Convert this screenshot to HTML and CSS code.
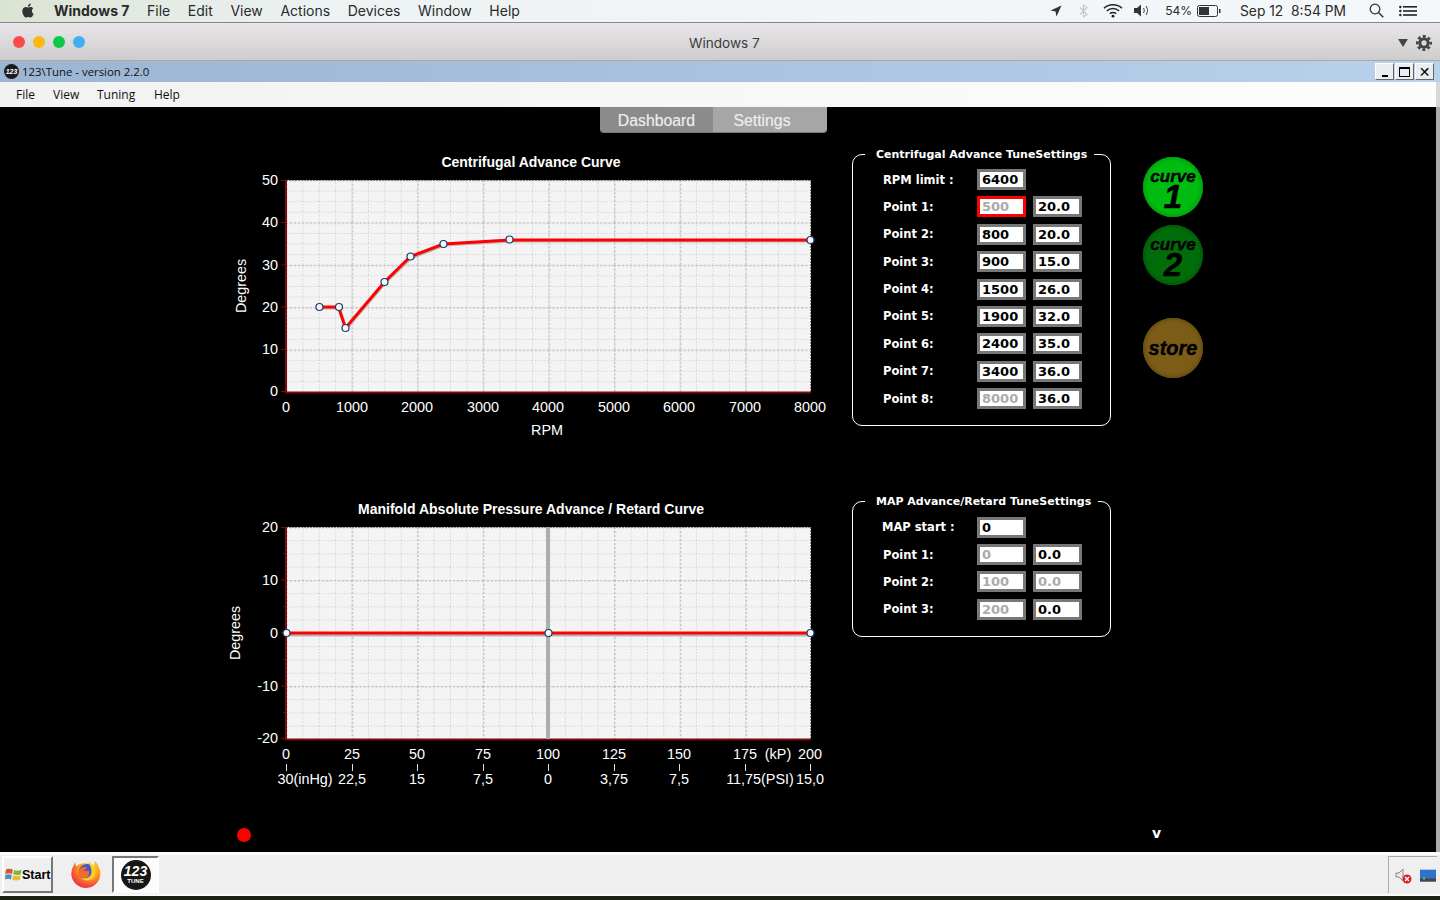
FILE: index.html
```html
<!DOCTYPE html>
<html lang="en">
<head>
    <meta charset="UTF-8">
    <title>123\Tune - version 2.2.0</title>
    <link rel="stylesheet" href="styles.css">
</head>
<body>
<!-- mac menu bar -->
<div class="mac-bar">
    <svg class="apple" viewBox="0 0 24 24"><path d="M12.152 6.896c-.948 0-2.415-1.078-3.96-1.04-2.04.027-3.91 1.183-4.961 3.014-2.117 3.675-.546 9.103 1.519 12.09 1.013 1.454 2.208 3.09 3.792 3.039 1.52-.065 2.09-.987 3.935-.987 1.831 0 2.35.987 3.96.948 1.637-.026 2.676-1.48 3.676-2.948 1.156-1.688 1.636-3.325 1.662-3.415-.039-.013-3.182-1.221-3.22-4.857-.026-3.04 2.48-4.494 2.597-4.559-1.429-2.09-3.623-2.324-4.39-2.376-2-.156-3.675 1.09-4.61 1.09zM15.53 3.83c.843-1.012 1.4-2.427 1.245-3.83-1.207.052-2.662.805-3.532 1.818-.78.896-1.454 2.338-1.273 3.714 1.338.104 2.715-.688 3.559-1.701"/></svg>
    <b class="mac-app">Windows 7</b>
    <span class="mac-item">File</span>
    <span class="mac-item">Edit</span>
    <span class="mac-item">View</span>
    <span class="mac-item">Actions</span>
    <span class="mac-item">Devices</span>
    <span class="mac-item">Window</span>
    <span class="mac-item">Help</span>
    <div class="mac-status">
        <svg class="st-loc" width="12" height="12" viewBox="0 0 12 12"><path d="M11.5.5L.5 5.5l5 1 1 5z" fill="#333"/></svg>
        <svg class="st-bt" width="9" height="14" viewBox="0 0 9 14"><path d="M1 3.5l7 7L4.5 13V1L8 3.5l-7 7" fill="none" stroke="#c4c6c8" stroke-width="1.1"/></svg>
        <svg class="st-wifi" width="20" height="15" viewBox="0 0 20 15"><g fill="none" stroke="#222" stroke-width="1.5"><path d="M1 5.2C6 .6 14 .6 19 5.2"/><path d="M3.8 8C7.5 4.8 12.5 4.8 16.2 8"/><path d="M6.8 10.6C8.7 9.2 11.3 9.2 13.2 10.6"/></g><circle cx="10" cy="13.2" r="1.4" fill="#222"/></svg>
        <svg class="st-vol" width="18" height="13" viewBox="0 0 18 13"><path d="M0 4h3l4-3.5v12L3 9H0z" fill="#333"/><g fill="none" stroke="#333" stroke-width="1"><path d="M9.500 4c1 1.500 1 3.500 0 5"/><path d="M12 2c2 3 2 6 0 9"/></g></svg>
        <span class="st-pct">54%</span>
        <svg class="st-bat" width="24" height="12" viewBox="0 0 24 12"><rect x=".5" y=".5" width="20" height="11" rx="2" fill="none" stroke="#333"/><rect x="2" y="2" width="10" height="8" fill="#333"/><rect x="22" y="4" width="1.500" height="4" fill="#333"/></svg>
        <span class="st-clock">Sep 12&nbsp; 8:54 PM</span>
        <svg class="st-find" width="15" height="15" viewBox="0 0 15 15"><circle cx="6" cy="6" r="4.800" fill="none" stroke="#333" stroke-width="1.300"/><path d="M9.500 9.500l4.800 4.800" stroke="#333" stroke-width="1.500"/></svg>
        <svg class="st-list" width="18" height="12" viewBox="0 0 18 12"><g fill="#222"><circle cx="1.300" cy="2" r="1.200"/><circle cx="1.300" cy="6" r="1.200"/><circle cx="1.300" cy="10" r="1.200"/><rect x="4" y="1" width="14" height="1.600"/><rect x="4" y="5.200" width="14" height="1.600"/><rect x="4" y="9.200" width="14" height="1.600"/></g></svg>
    </div>
</div>

<!-- vm window title -->
<div class="vm-bar">
    <div class="lights">
        <i class="light red"></i><i class="light amber"></i><i class="light green"></i><i class="light blue"></i>
    </div>
    <span class="vm-title">Windows 7</span>
    <svg class="vm-drop" width="10" height="8" viewBox="0 0 11 9"><path d="M0 0h11L5.500 9z" fill="#444"/></svg>
    <svg class="vm-gear" width="16" height="16" viewBox="0 0 16 16"><circle cx="8" cy="8" r="4.200" fill="none" stroke="#444" stroke-width="3"/><circle cx="8" cy="8" r="6.700" fill="none" stroke="#444" stroke-width="2.600" stroke-dasharray="2.900 2.360" stroke-dashoffset="1.400"/></svg>
</div>

<!-- app title -->
<div class="app-title">
    <div class="app-logo">123</div>
    <span class="app-name">123\Tune - version 2.2.0</span>
    <div class="win-btns">
        <div class="win-btn"><i class="glyph-min"></i></div>
        <div class="win-btn"><i class="glyph-max"></i></div>
        <div class="win-btn glyph-close">&#10005;</div>
    </div>
</div>
<div class="app-menu">
    <span class="menu-file">File</span>
    <span class="menu-view">View</span>
    <span class="menu-tuning">Tuning</span>
    <span class="menu-help">Help</span>
</div>

<div class="main">
    <div class="tabs">
        <div class="tab active">Dashboard</div>
        <div class="tab settings">Settings</div>
    </div>

    <div class="tune-row first">
        <svg class="chart chart-a" viewBox="225 145 605 300">
            <defs>
                <pattern id="minorA" patternUnits="userSpaceOnUse" x="286" y="180" width="16.406" height="10.6">
                    <path d="M0 .5H16.406M.5 0V10.6" stroke="#c8c8c8" stroke-dasharray="1 2" fill="none"/>
                </pattern>
                <pattern id="majorA" patternUnits="userSpaceOnUse" x="286" y="180" width="65.625" height="42.4">
                    <path d="M0 .75H65.625M.75 0V42.4" stroke="#c4c4c4" stroke-width="1.500" stroke-dasharray="2 2" fill="none"/>
                </pattern>
            </defs>
            <text class="chart-title" x="531" y="167">Centrifugal Advance Curve</text>
            <rect x="286" y="180" width="525" height="212" fill="#f4f4f4"/>
            <rect x="286" y="180" width="525" height="212" fill="url(#minorA)"/>
            <rect x="286" y="180" width="525" height="212" fill="url(#majorA)"/>
            <path class="frame" d="M286 180.500H811M810.500 180V392"/>
            <path class="axis" d="M286 180V392.500H811"/>
            <path class="tick" d="M281 180.500h5M281 222.500h5M281 265h5M281 307h5M281 349.500h5M281 391.500h5"/>
            <g class="curve-shadow"><path d="M320 308H339L346 329L385 283L411 258L444 245L510 241H811"/></g>
            <path class="curve" d="M319.500 307H338.500L345.500 328L384.500 282L410.500 256.500L443.500 244L509.500 240H810.500"/>
            <g class="knobs">
                <circle cx="319.500" cy="307" r="3.500"/><circle cx="339" cy="307" r="3.500"/><circle cx="345.500" cy="328" r="3.500"/>
                <circle cx="384.500" cy="282" r="3.500"/><circle cx="410.500" cy="256.500" r="3.500"/><circle cx="443.500" cy="244" r="3.500"/>
                <circle cx="509.500" cy="239.500" r="3.500"/><circle cx="810.500" cy="240" r="3.500"/>
            </g>
            <g class="y-label">
                <text x="278" y="185">50</text><text x="278" y="227">40</text><text x="278" y="270">30</text>
                <text x="278" y="312">20</text><text x="278" y="354">10</text><text x="278" y="396">0</text>
            </g>
            <g class="x-label">
                <text x="286" y="412">0</text><text x="352" y="412">1000</text><text x="417" y="412">2000</text>
                <text x="483" y="412">3000</text><text x="548" y="412">4000</text><text x="614" y="412">5000</text>
                <text x="679" y="412">6000</text><text x="745" y="412">7000</text><text x="810" y="412">8000</text>
                <text x="547" y="435">RPM</text>
            </g>
            <text class="axis-name" transform="translate(246 286) rotate(-90)">Degrees</text>
        </svg>

        <fieldset class="panel panel-a">
            <legend>Centrifugal Advance TuneSettings</legend>
            <div class="point-row"><span class="point-label">RPM limit :</span><div class="val">6400</div></div>
            <div class="point-row"><span class="point-label">Point 1:</span><div class="val muted alert">500</div><div class="val">20.0</div></div>
            <div class="point-row"><span class="point-label">Point 2:</span><div class="val">800</div><div class="val">20.0</div></div>
            <div class="point-row"><span class="point-label">Point 3:</span><div class="val">900</div><div class="val">15.0</div></div>
            <div class="point-row"><span class="point-label">Point 4:</span><div class="val">1500</div><div class="val">26.0</div></div>
            <div class="point-row"><span class="point-label">Point 5:</span><div class="val">1900</div><div class="val">32.0</div></div>
            <div class="point-row"><span class="point-label">Point 6:</span><div class="val">2400</div><div class="val">35.0</div></div>
            <div class="point-row"><span class="point-label">Point 7:</span><div class="val">3400</div><div class="val">36.0</div></div>
            <div class="point-row"><span class="point-label">Point 8:</span><div class="val muted">8000</div><div class="val">36.0</div></div>
        </fieldset>

        <div class="round-btns">
            <div class="round-btn curve-on"><span class="btn-word">curve</span><span class="btn-num">1</span></div>
            <div class="round-btn curve-off"><span class="btn-word">curve</span><span class="btn-num">2</span></div>
            <div class="round-btn store"><span class="btn-store">store</span></div>
        </div>
    </div>

    <div class="tune-row second">
        <svg class="chart chart-b" viewBox="225 492 605 308">
            <defs>
                <pattern id="minorB" patternUnits="userSpaceOnUse" x="286" y="527" width="16.406" height="13.250">
                    <path d="M0 .5H16.406M.5 0V13.250" stroke="#c8c8c8" stroke-dasharray="1 2" fill="none"/>
                </pattern>
                <pattern id="majorB" patternUnits="userSpaceOnUse" x="286" y="527" width="65.625" height="53">
                    <path d="M0 .75H65.625M.75 0V53" stroke="#c4c4c4" stroke-width="1.500" stroke-dasharray="2 2" fill="none"/>
                </pattern>
            </defs>
            <text class="chart-title" x="531" y="514">Manifold Absolute Pressure Advance / Retard Curve</text>
            <rect x="286" y="527" width="525" height="212" fill="#f4f4f4"/>
            <rect x="286" y="527" width="525" height="212" fill="url(#minorB)"/>
            <rect x="286" y="527" width="525" height="212" fill="url(#majorB)"/>
            <path class="frame" d="M286 527.500H811M810.500 527V739"/>
            <path class="axis" d="M286 527V739.500H811"/>
            <path class="tick" d="M281 527.500h5M283 553.500h3M281 580h5M283 606.500h3M281 633h5M283 659.500h3M281 686h5M283 712.500h3M281 738.500h5"/>
            <rect x="546" y="527" width="4" height="212" fill="#adadad"/>
            <g class="curve-shadow"><path d="M287 635H811"/></g>
            <path class="curve" d="M286 633H810.500"/>
            <g class="knobs">
                <circle cx="286.500" cy="633" r="3.500"/><circle cx="548.500" cy="633" r="3.500"/><circle cx="810.500" cy="633" r="3.500"/>
            </g>
            <g class="y-label">
                <text x="278" y="532">20</text><text x="278" y="585">10</text><text x="278" y="638">0</text>
                <text x="278" y="691">-10</text><text x="278" y="743">-20</text>
            </g>
            <g class="x-label">
                <text x="286" y="759">0</text><text x="352" y="759">25</text><text x="417" y="759">50</text>
                <text x="483" y="759">75</text><text x="548" y="759">100</text><text x="614" y="759">125</text>
                <text x="679" y="759">150</text><text x="745" y="759">175</text><text x="778" y="759">(kP)</text><text x="810" y="759">200</text>
            </g>
            <path class="pressure-tick" d="M286.500 764v7M352.500 764v7M417.500 764v7M483.500 764v7M548.500 764v7M614.500 764v7M679.500 764v7M745.500 764v7M810.500 764v7"/>
            <g class="x-label">
                <text x="305" y="784">30(inHg)</text><text x="352" y="784">22,5</text><text x="417" y="784">15</text>
                <text x="483" y="784">7,5</text><text x="548" y="784">0</text><text x="614" y="784">3,75</text>
                <text x="679" y="784">7,5</text><text x="760" y="784">11,75(PSI)</text><text x="810" y="784">15,0</text>
            </g>
            <text class="axis-name" transform="translate(240 633) rotate(-90)">Degrees</text>
        </svg>

        <fieldset class="panel panel-b">
            <legend>MAP Advance/Retard TuneSettings</legend>
            <div class="point-row"><span class="point-label map-start">MAP start :</span><div class="val">0</div></div>
            <div class="point-row"><span class="point-label">Point 1:</span><div class="val muted">0</div><div class="val">0.0</div></div>
            <div class="point-row"><span class="point-label">Point 2:</span><div class="val muted">100</div><div class="val muted">0.0</div></div>
            <div class="point-row"><span class="point-label">Point 3:</span><div class="val muted">200</div><div class="val">0.0</div></div>
        </fieldset>
    </div>

    <div class="status-row">
        <i class="status-dot"></i>
        <b class="status-v">v</b>
    </div>
</div>

<!-- windows taskbar -->
<div class="taskbar">
    <div class="start-btn">
        <svg class="start-flag" width="17" height="15" viewBox="0 0 17 15">
            <path d="M1 2.500C3 1.500 5 1.500 7.800 2.600L7 7C4.500 6 3 6 .3 7z" fill="#d9532c"/>
            <path d="M9 3C11 4 13.500 4 16.500 2.800L15.800 7.200C13 8.300 10.800 8.300 8.300 7.300z" fill="#7fb53c"/>
            <path d="M.2 8C2.500 7 4.500 7 6.800 8L6 12.600C4 11.600 2 11.600 .2 12.600z" fill="#4a90c8"/>
            <path d="M8.100 8.400C10.500 9.300 13 9.300 15.600 8.300L15 12.800C12.500 13.800 10 13.800 7.300 12.800z" fill="#eebb33"/>
        </svg>
        <b>Start</b>
    </div>
    <svg class="firefox" width="30" height="30" viewBox="0 0 30 30">
        <defs>
            <radialGradient id="foxBody" cx="65%" cy="25%" r="85%">
                <stop offset="0" stop-color="#ffe226"/><stop offset=".45" stop-color="#ff9a1f"/><stop offset=".8" stop-color="#f4433b"/><stop offset="1" stop-color="#e3316a"/>
            </radialGradient>
        </defs>
        <path d="M24 1c1.500 2 2.500 3 3.200 5a14.500 14.500 0 1 1-24.500-.5L4 2l1 4.500C8 4 11 3 14 3.200 18 3.300 21 4 23 6z" fill="url(#foxBody)"/>
        <circle cx="16" cy="12" r="8" fill="#3f57d0"/>
        <path d="M9 9c2-2 5-2.500 7-1.500-1 1.500-2 2-3.500 2.500 1 1 3.500 1 5 .5 1.500 2.500.5 6-2.500 7.500-3 1-6-.5-7-2-1.500-2.500-.5-5 1-7z" fill="#f5692c"/>
        <path d="M17 2c5 1.500 8 6 7.500 11-.5 4.500-4 7.500-8.500 7.500-2.500 0-4.500-1-6-2.500 5 1.500 10.500-1 10.500-6 0-4-1.500-7-3.500-10z" fill="#ffcf26"/>
    </svg>
    <div class="task-app">
        <div class="tune-logo"><span class="tune-num">123</span><span class="tune-word">TUNE</span></div>
    </div>
    <div class="tray">
        <svg width="17" height="17" viewBox="0 0 17 17">
            <path d="M1 6h3l4-4v12l-4-4H1z" fill="#e8e8e8" stroke="#888"/>
            <circle cx="12" cy="12" r="4.500" fill="#dd2222"/>
            <path d="M10 10l4 4M14 10l-4 4" stroke="#fff" stroke-width="1.300"/>
        </svg>
        <svg width="16" height="13" viewBox="0 0 16 13">
            <rect width="16" height="12.500" fill="#2f74c9"/><rect y="9.500" width="16" height="3" fill="#444"/>
            <rect x="3" y="8.500" width="2" height="2" fill="#7fc241"/>
            <rect width="16" height="1" fill="#a9c9ea"/>
        </svg>
    </div>
</div>
<div class="wallpaper"></div>
</body>
</html>
```

FILE: styles.css
```css
* {
    box-sizing: border-box;
}

html, body {
    margin: 0;
    height: 100%;
}

body {
    width: 1440px;
    height: 900px;
    overflow: hidden;
    background: #1c2116;
    font-family: "Liberation Sans", Arial, sans-serif;
}

/* mac menu bar */
.mac-bar {
    display: flex;
    align-items: center;
    height: 23px;
    padding-left: 21px;
    padding-bottom: 1px;
    background: linear-gradient(90deg, #dbe3d3, #edf2f3 22%, #f5f8fa);
    border-bottom: 1px solid #84878a;
    font-family: Inter, "Liberation Sans", sans-serif;
    font-size: 14px;
    color: #2a2a2a;
}

.apple {
    width: 14px;
    height: 15px;
    margin-right: 19px;
    fill: #333;
}

.mac-app {
    width: 93px;
    font-weight: 700;
    white-space: nowrap;
}

.mac-item {
    margin-right: 17.600px;
}

.mac-status {
    display: flex;
    align-items: center;
    margin-left: auto;
    font-size: 14px;
}

.st-loc { margin-right: 17px; }
.st-bt { margin-right: 15px; }
.st-wifi { margin-right: 11px; }
.st-vol { margin-right: 13px; }
.st-pct { margin-right: 5px; font-size: 12px; }
.st-bat { margin-right: 19px; }
.st-clock { margin-right: 23px; font-size: 13.800px; }
.st-find { margin-right: 15px; }
.st-list { margin-right: 23px; }

/* vm window bar */
.vm-bar {
    display: flex;
    align-items: center;
    position: relative;
    height: 38px;
    padding-left: 13px;
    background: linear-gradient(#e9e7e9, #cecccd);
    border-bottom: 1px solid #aaa;
}

.lights {
    display: flex;
    gap: 8px;
}

.light {
    width: 12px;
    height: 12px;
    border-radius: 50%;
}

.light.red { background: #fc4a4c; }
.light.amber { background: #fdb80f; }
.light.green { background: #0fc84a; }
.light.blue { background: #43aef2; }

.vm-title {
    margin-left: 604px;
    margin-top: 3px;
    font-family: Inter, "Liberation Sans", sans-serif;
    font-size: 13.600px;
    color: #3c3c3c;
}

.vm-drop {
    margin-left: auto;
    margin-top: 3px;
    margin-right: 8px;
}

.vm-gear {
    margin-top: 2px;
    margin-right: 8px;
}

/* app title and menu */
.app-title {
    display: flex;
    align-items: center;
    height: 21px;
    padding-left: 4px;
    background: linear-gradient(90deg, #9bb5d2, #b8d2ec);
    font-family: "Open Sans", sans-serif;
    font-size: 11.400px;
    color: #111;
}

.app-logo {
    width: 15px;
    height: 15px;
    margin-right: 3px;
    border-radius: 50%;
    background: #1b1b1b;
    color: #fff;
    font: italic 700 7px/15px "Liberation Sans", sans-serif;
    text-align: center;
}

.win-btns {
    display: flex;
    gap: 1px;
    margin-left: auto;
    margin-right: 6px;
}

.win-btn {
    display: flex;
    align-items: center;
    justify-content: center;
    width: 19px;
    height: 17px;
    background: #e8edf2;
    border: 1px solid;
    border-color: #fff #666 #666 #fff;
}

.glyph-min {
    width: 6px;
    height: 2px;
    margin-top: 8px;
    background: #000;
}

.glyph-max {
    width: 11px;
    height: 10px;
    border: 1px solid #000;
    border-top-width: 2px;
}

.glyph-close {
    color: #000;
    font: 700 14px/1 "DejaVu Sans", sans-serif;
}

.app-menu {
    display: flex;
    align-items: center;
    height: 25px;
    padding-left: 16px;
    background: linear-gradient(90deg, #f2f2f2, #fdfdfd);
    border-right: 4px solid #d8d8d8;
    font-family: "Open Sans", sans-serif;
    font-size: 12px;
    color: #111;
}

.menu-file { width: 37px; }
.menu-view { width: 44px; }
.menu-tuning { width: 57px; }

/* main area */
.main {
    height: 745px;
    background: #000;
    border-right: 4px solid #ababab;
    color: #fff;
}

.tabs {
    display: flex;
    width: 227px;
    height: 26px;
    margin-left: 600px;
}

.tab {
    flex: none;
    width: 113px;
    padding-top: 5px;
    background: #8b8b8b;
    border-bottom: 1px solid #777;
    border-radius: 0 0 0 4px;
    color: #ececec;
    font-size: 15.800px;
    text-align: center;
    text-shadow: 0 0 1px rgba(236, 236, 236, 0.5);
}

.tab.settings {
    width: 114px;
    padding-right: 16px;
    background: #a6a6a6;
    border-radius: 0 0 4px 0;
}

.tune-row {
    display: flex;
    align-items: flex-start;
    padding-left: 225px;
}

.tune-row.first {
    margin-top: 12px;
}

.tune-row.second {
    margin-top: 47px;
}

.chart {
    display: block;
    flex: none;
    width: 605px;
}

.chart-a { height: 300px; }
.chart-b { height: 308px; }

.chart text {
    fill: #fff;
}

.chart-title {
    font-size: 14px;
    font-weight: 700;
    text-anchor: middle;
}

.y-label text {
    font-size: 14.400px;
    text-anchor: end;
}

.x-label text {
    font-size: 14.400px;
    text-anchor: middle;
}

.axis-name {
    font-size: 14.300px;
    text-anchor: middle;
}

.frame {
    fill: none;
    stroke: #8c8c8c;
    stroke-dasharray: 2 1;
}

.axis {
    fill: none;
    stroke: #7c0a0a;
    stroke-width: 2;
}

.tick {
    fill: none;
    stroke: #7c0a0a;
}

.pressure-tick {
    fill: none;
    stroke: #ddd;
}

.curve {
    fill: none;
    stroke: #f00;
    stroke-width: 3;
}

.curve-shadow path {
    fill: none;
    stroke: #b5b5b5;
    stroke-width: 3;
}

.knobs circle {
    fill: #f5f7fa;
    stroke: #1e3a66;
    stroke-width: 1.200;
}

/* settings panels */
.panel {
    flex: none;
    width: 259px;
    min-width: 0;
    margin: 1px 0 0 22px;
    padding: 7px 0 0 30px;
    border: 1px solid #fff;
    border-radius: 10px;
    font-family: "DejaVu Sans", sans-serif;
}

.panel-a { height: 280px; }
.panel-b { height: 144px; padding-top: 7.700px; }

.panel legend {
    margin-left: -18px;
    padding: 1px 7px 0 11px;
    color: #fff;
    font-size: 11px;
    font-weight: 700;
    line-height: 15px;
    white-space: nowrap;
}

.point-row {
    display: flex;
    align-items: center;
    gap: 7px;
    height: 21px;
    margin-bottom: 6.400px;
}

.point-label {
    width: 87px;
    font-size: 11.500px;
    font-weight: 700;
    white-space: nowrap;
}

.map-start {
    margin-left: -1px;
    margin-right: 1px;
}

.val {
    width: 49px;
    height: 21px;
    padding-left: 2px;
    background: #fff;
    border: 3px solid #777;
    color: #000;
    font-size: 13px;
    font-weight: 700;
    line-height: 15px;
}

.val.muted {
    color: #aaa;
}

.val.alert {
    border-color: #f00;
}

/* round buttons */
.round-btns {
    display: flex;
    flex-direction: column;
    width: 60px;
    margin: 12px 0 0 32px;
}

.round-btn {
    display: flex;
    flex-direction: column;
    align-items: center;
    justify-content: center;
    width: 60px;
    height: 60px;
    border-radius: 50%;
    color: #000;
    font-style: italic;
    font-weight: 700;
}

.round-btn.curve-on {
    padding-top: 7px;
    background: #00bb10;
    box-shadow: inset 0 0 3px 2px #00a20e;
}

.round-btn.curve-off {
    margin-top: 8px;
    padding-top: 7px;
    background: #006d0a;
    box-shadow: inset 0 0 3px 2px #005c08;
}

.round-btn.store {
    margin-top: 33px;
    background: #7b5d18;
    box-shadow: inset 0 0 3px 2px #6a4f12;
}

.btn-word {
    margin-top: -2px;
    font-size: 17px;
    line-height: 14px;
    -webkit-text-stroke: .4px #000;
}

.btn-num {
    font-size: 33px;
    line-height: 25px;
    -webkit-text-stroke: .6px #000;
}

.btn-store {
    font-size: 20px;
    -webkit-text-stroke: .4px #000;
}

.status-row {
    display: flex;
    align-items: center;
    margin-top: 26px;
    padding-left: 237px;
}

.status-dot {
    width: 14px;
    height: 14px;
    border-radius: 50%;
    background: #f00;
}

.status-v {
    margin-left: 901px;
    margin-bottom: 4px;
    font: 700 14px/14px "DejaVu Sans", sans-serif;
}

/* taskbar */
.taskbar {
    display: flex;
    align-items: center;
    height: 44px;
    padding-left: 2px;
    background: #efefef;
    border-top: 3px solid #fbfbfb;
    border-bottom: 2px solid #fbfbfb;
}

.start-btn {
    display: flex;
    align-items: center;
    width: 51px;
    height: 37px;
    padding-left: 1px;
    background: #efefef;
    border: 2px solid;
    border-color: #fff #777 #777 #fff;
    color: #000;
}

.start-flag {
    flex: none;
}

.start-btn b {
    font-size: 12.500px;
}

.firefox {
    margin-left: 18px;
}

.task-app {
    display: flex;
    align-items: center;
    justify-content: center;
    width: 47px;
    height: 37px;
    margin-left: 11px;
    background: #fcfcfc;
    border: 2px solid;
    border-color: #777 #fff #fff #777;
}

.tune-logo {
    display: flex;
    flex-direction: column;
    align-items: center;
    justify-content: center;
    width: 30px;
    height: 30px;
    border-radius: 50%;
    background: #161616;
    color: #fff;
}

.tune-num {
    font-size: 14px;
    font-style: italic;
    font-weight: 700;
    line-height: 13px;
}

.tune-word {
    font-size: 6px;
    font-weight: 700;
    line-height: 7px;
}

.tray {
    display: flex;
    align-items: center;
    gap: 8px;
    width: 49px;
    height: 37px;
    margin-left: auto;
    margin-right: 3px;
    padding-left: 6px;
    border: 1px solid #aaa;
    border-width: 1px 0 0 1px;
}

.wallpaper {
    height: 4px;
}
```
